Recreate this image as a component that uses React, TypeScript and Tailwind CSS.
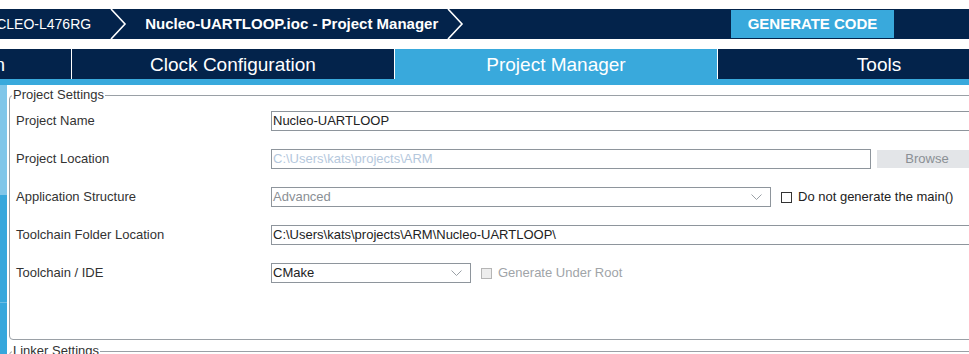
import React from "react";

const Chevron = () => (
  <svg width="17" height="30" viewBox="0 0 17 30" className="shrink-0">
    <polyline points="1,0 15,15 1,30" fill="none" stroke="#ffffff" strokeWidth="1.6" />
  </svg>
);

const SelectArrow = () => (
  <svg width="11" height="7" viewBox="0 0 11 7" className="shrink-0">
    <polyline points="0.5,0.5 5.5,5.5 10.5,0.5" fill="none" stroke="#9aa0a6" strokeWidth="1" />
  </svg>
);

const Row = ({ label, children }: { label: string; children: React.ReactNode }) => (
  <div className="flex h-[38px] items-center">
    <div className="w-[255px] shrink-0 text-[13px] text-[#333]">{label}</div>
    {children}
  </div>
);

export default function App() {
  return (
    <div
      className="w-[969px] h-[354px] overflow-hidden bg-white relative"
      style={{ fontFamily: '"Liberation Sans", Arial, sans-serif' }}
    >
      <div className="h-[9px]" />
      {/* breadcrumb bar */}
      <div className="h-[30px] bg-[#03234b] flex items-center text-white">
        <div className="ml-[-24px] text-[14px] whitespace-nowrap">NUCLEO-L476RG</div>
        <div className="ml-[19px]">
          <Chevron />
        </div>
        <div className="ml-[18px] text-[15px] font-bold whitespace-nowrap">
          Nucleo-UARTLOOP.ioc - Project Manager
        </div>
        <div className="ml-[9px]">
          <Chevron />
        </div>
        <div className="ml-auto mr-[75px] w-[163px] h-[28px] bg-[#39a9dc] flex items-center justify-center text-[15px] font-bold">
          GENERATE CODE
        </div>
      </div>
      <div className="h-[10px]" />
      {/* tabs */}
      <div className="h-[30px] flex gap-px ml-[-251px] bg-white w-[1300px]">
        <div className="w-[322px] shrink-0 bg-[#03234b] text-white text-[19px] pt-[2px] flex items-center justify-center">
          Pinout &amp; Configuration
        </div>
        <div className="w-[322px] shrink-0 bg-[#03234b] text-white text-[19px] pt-[2px] flex items-center justify-center">
          Clock Configuration
        </div>
        <div className="w-[322px] shrink-0 bg-[#39a9dc] text-white text-[19px] pt-[2px] flex items-center justify-center">
          Project Manager
        </div>
        <div className="w-[322px] shrink-0 bg-[#03234b] text-white text-[19px] pt-[2px] flex items-center justify-center">
          Tools
        </div>
      </div>
      <div className="h-[6px] bg-[#39a9dc]" />
      {/* body */}
      <div className="flex">
        <div className="w-[7px] shrink-0 flex flex-col">
          <div className="h-[110px] bg-[#80c6e9]" />
          <div className="h-[107px] bg-[#36a7dc]" />
          <div className="h-[1px] bg-[#6cbde5]" />
          <div className="h-[60px] bg-[#36a7dc]" />
        </div>
        <div className="ml-[2px] w-[1100px] shrink-0">
          <fieldset className="mt-[3px] border border-[#9aa0a6] rounded-[4px] pb-[47px]">
            <legend className="ml-[2px] px-px text-[13px] leading-[14px] text-[#333]">Project Settings</legend>
            <div className="pl-[6px]">
              <Row label="Project Name">
                <div className="flex-1 h-[20px] border border-[#8e959c] flex items-center pl-px text-[13px] text-[#222]">
                  Nucleo-UARTLOOP
                </div>
              </Row>
              <Row label="Project Location">
                <div className="w-[600px] h-[20px] border border-[#8e959c] flex items-center pl-px text-[13px] text-[#b5c8dd]">
                  C:\Users\kats\projects\ARM
                </div>
                <div className="ml-[6px] w-[100px] h-[18px] bg-[#e3e5e8] flex items-center justify-center text-[13px] text-[#8a8f94]">
                  Browse
                </div>
              </Row>
              <Row label="Application Structure">
                <div className="w-[500px] h-[20px] border border-[#8e959c] flex items-center pl-px pr-[8px] text-[13px] text-[#8a8f95]">
                  <span className="flex-1">Advanced</span>
                  <SelectArrow />
                </div>
                <div className="ml-[10px] w-[11px] h-[11px] border border-[#333]" />
                <div className="ml-[6px] text-[13px] text-[#222]">Do not generate the main()</div>
              </Row>
              <Row label="Toolchain Folder Location">
                <div className="flex-1 h-[20px] border border-[#8e959c] flex items-center pl-px text-[13px] text-[#222]">
                  C:\Users\kats\projects\ARM\Nucleo-UARTLOOP\
                </div>
              </Row>
              <Row label="Toolchain / IDE">
                <div className="w-[200px] h-[20px] border border-[#8e959c] flex items-center pl-px pr-[8px] text-[13px] text-[#222]">
                  <span className="flex-1">CMake</span>
                  <SelectArrow />
                </div>
                <div className="ml-[10px] w-[11px] h-[11px] border border-[#b5b5b5] bg-[#ededed]" />
                <div className="ml-[6px] text-[13px] text-[#a0a4a8]">Generate Under Root</div>
              </Row>
            </div>
          </fieldset>
          <fieldset className="mt-[4px] border border-[#9aa0a6] rounded-[4px] pb-[40px]">
            <legend className="ml-[2px] px-px text-[13px] leading-[14px] text-[#333]">Linker Settings</legend>
          </fieldset>
        </div>
      </div>
    </div>
  );
}
